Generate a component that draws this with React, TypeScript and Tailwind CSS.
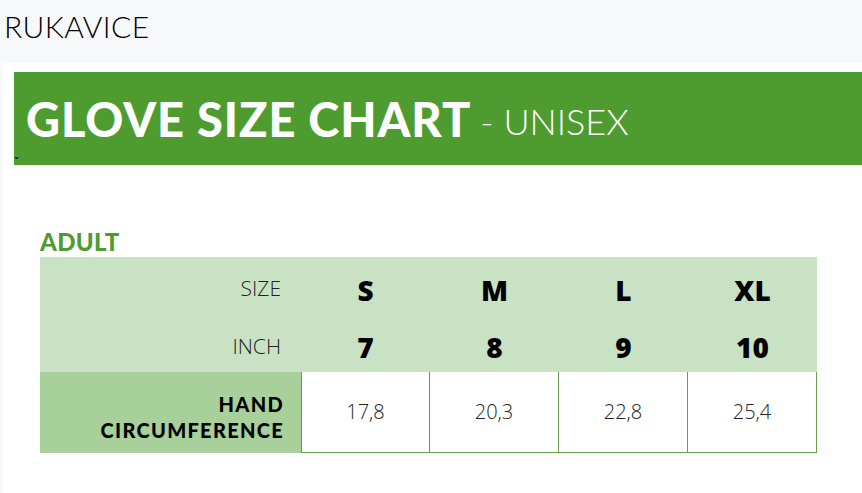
import React from "react";

const sizes = ["S", "M", "L", "XL"];
const inches = ["7", "8", "9", "10"];
const circ = ["17,8", "20,3", "22,8", "25,4"];

export default function App() {
  return (
    <div className="w-[862px] h-[493px] overflow-hidden bg-[#f7f8fa] font-['Lato',sans-serif]">
      <div className="h-[63px] pl-[4px] pt-[7px] text-[30px] font-light text-black leading-[38px] tracking-[0.4px]">
        RUKAVICE
      </div>
      <div className="ml-[3px] h-[430px] bg-white pt-[9px] pl-[11px]">
        <div className="relative h-[93px] bg-[#4e9c2f] pl-[12px] flex items-center text-white">
          <span className="text-[47px] font-black tracking-[0.9px] leading-none mt-[2px]">GLOVE SIZE CHART</span>
          <span className="text-[36px] font-light leading-none ml-[9px] mt-[4px]">- UNISEX</span>
          <span className="absolute left-[0px] bottom-[-4px] text-[13px] leading-none text-black">ˇ</span>
        </div>
        <div className="pl-[26px] pt-[64px]">
          <div className="text-[24px] font-black text-[#4e9c2f] leading-[26px] h-[28px] tracking-[0.3px]">ADULT</div>
          <div className="w-[777px] font-['Open_Sans',sans-serif]">
            <div className="bg-[#cae2c4]">
              <div className="flex h-[60px] items-center">
                <div className="w-[261px] pr-[20px] text-right text-[21px] font-light text-[#222] pt-[4px]">SIZE</div>
                {sizes.map((s) => (
                  <div key={s} className="w-[129px] text-center text-[28px] font-extrabold text-black pt-[6px]">
                    {s}
                  </div>
                ))}
              </div>
              <div className="flex h-[55px] items-center">
                <div className="w-[261px] pr-[20px] text-right text-[21px] font-light text-[#222] pt-[4px]">INCH</div>
                {inches.map((s) => (
                  <div key={s} className="w-[129px] text-center text-[28px] font-extrabold text-black pt-[4px]">
                    {s}
                  </div>
                ))}
              </div>
            </div>
            <div className="flex h-[81px]">
              <div className="w-[261px] bg-[#a8d09a] pr-[17px] flex flex-col justify-center items-end font-['Lato',sans-serif] text-[20px] font-black text-black leading-[26px] tracking-[1.3px] pt-[8px]">
                <div>HAND</div>
                <div>CIRCUMFERENCE</div>
              </div>
              {circ.map((c, i) => (
                <div
                  key={c}
                  className={`w-[129px] border-b border-r border-[#6a9e4e] flex items-center justify-center text-[20px] font-light text-[#222] ${i === 0 ? "border-l" : ""}`}
                >
                  {c}
                </div>
              ))}
            </div>
          </div>
        </div>
      </div>
    </div>
  );
}
